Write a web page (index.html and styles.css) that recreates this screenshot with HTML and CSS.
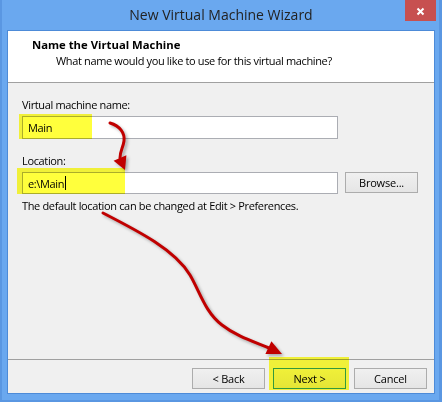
FILE: index.html
```html
<!DOCTYPE html>
<html>
<head>
<meta charset="utf-8">
<link rel="stylesheet" href="styles.css">
</head>
<body>
<div class="window">
  <div class="titlebar">
    <span class="title">New Virtual Machine Wizard</span>
    <div class="close">
      <svg width="31" height="21" viewBox="0 0 31 21"><path d="M12.5 8.5 L18.5 14.5 M18.5 8.5 L12.5 14.5" stroke="#fff" stroke-width="2" fill="none"/></svg>
    </div>
  </div>
  <div class="client">
    <div class="header">
      <div class="h-title">Name the Virtual Machine</div>
      <div class="h-sub">What name would you like to use for this virtual machine?</div>
    </div>
    <div class="body">
      <div class="lbl">Virtual machine name:</div>
      <div class="row"><div class="textbox">Main</div></div>
      <div class="lbl lbl2">Location:</div>
      <div class="row"><div class="textbox tb2">e:\Main<span class="caret"></span></div><button class="btn browse">Browse...</button></div>
      <div class="hint">The default location can be changed at Edit &gt; Preferences.</div>
    </div>
    <div class="footer">
      <button class="btn">&lt; Back</button>
      <button class="btn default">Next &gt;</button>
      <button class="btn">Cancel</button>
    </div>
  </div>
  <div class="hl hl-name"></div>
  <div class="hl hl-loc"></div>
  <div class="hl hl-next"></div>
  <svg class="arrows" width="442" height="402" viewBox="0 0 442 402">
    <g fill="none" stroke="#c00000" stroke-width="3" stroke-linecap="round">
      <path d="M110,123 C120,126 125,133 124,141 C123,148 120,151 120,158"/>
      <path d="M103,213 C140,232 175,250 190,275 C200,292 205,312 222,325 C236,336 252,341 269,348"/>
    </g>
    <g fill="#c00000">
      <polygon points="125,170 113.6,160.7 126.4,155.3"/>
      <polygon points="282,354 265.4,353.9 271.4,341.3"/>
    </g>
  </svg>
</div>
</body>
</html>
```
FILE: styles.css
```css
html, body {
  margin: 0;
  padding: 0;
  background: #ffffff;
}
.window {
  position: relative;
  width: 442px;
  height: 402px;
  box-sizing: border-box;
  background: #6aa8ef;
  box-shadow: inset 2px 0 0 #5a97e2, inset -3px 0 0 #5a97e2, inset 0 -2px 0 #5a97e2;
  display: flex;
  flex-direction: column;
  font-family: "Open Sans", "Noto Sans", sans-serif;
  font-size: 11px;
  letter-spacing: -0.35px;
  color: #000;
}
.titlebar {
  height: 30px;
  display: grid;
  grid-template-columns: 31px 1fr 31px;
  padding: 0 6px;
  align-items: start;
  letter-spacing: 0;
}
.title {
  grid-column: 2;
  text-align: center;
  font-size: 14px;
  line-height: 20px;
  padding-top: 5px;
  color: #222;
}
.close {
  grid-column: 3;
  width: 31px;
  height: 21px;
  background: #c75050;
}
.close svg { display: block; }
.client {
  margin-left: 7px;
  width: 428px;
  height: 364px;
  box-sizing: border-box;
  border: 1px solid #4d8bd8;
  background: #f0f0f0;
  display: flex;
  flex-direction: column;
}
.header {
  height: 52px;
  box-sizing: border-box;
  background: #fff;
  border-bottom: 1px solid #a0a0a0;
  padding-top: 6px;
}
.h-title {
  padding-left: 24px;
  font-weight: bold;
  font-size: 11.3px;
  letter-spacing: 0;
  line-height: 16px;
}
.h-sub {
  padding-left: 48px;
  line-height: 15px;
}
.body {
  flex: 1;
  padding: 14px 0 0 14px;
}
.lbl {
  line-height: 15px;
  margin-bottom: 4px;
}
.lbl2 { margin-top: 14px; }
.row {
  display: flex;
  align-items: flex-start;
  gap: 7px;
}
.textbox {
  width: 316px;
  height: 23px;
  box-sizing: border-box;
  border: 1px solid #abadb3;
  background: #fff;
  padding-left: 5px;
  line-height: 19px;
  display: flex;
  align-items: center;
}
.tb2 { height: 22px; }
.caret {
  display: inline-block;
  width: 1px;
  height: 14px;
  background: #000;
  margin-left: 1px;
}
.btn {
  width: 73px;
  height: 21px;
  box-sizing: border-box;
  border: 1px solid #acacac;
  background: linear-gradient(#f0f0f0, #e5e5e5);
  font-family: inherit;
  font-size: 11px;
  letter-spacing: -0.2px;
  color: #000;
  padding: 0;
  margin: 0;
  line-height: 19px;
}
.btn.default { border-color: #3399ff; }
.hint {
  margin-top: 4px;
  line-height: 15px;
}
.footer {
  height: 34px;
  box-sizing: border-box;
  border-top: 1px solid #a0a0a0;
  display: flex;
  justify-content: flex-end;
  gap: 8px;
  padding: 8px 7px 0 0;
}
.hl {
  position: absolute;
  background: #ffff3c;
  mix-blend-mode: multiply;
}
.hl-name { left: 19px; top: 114px; width: 73px; height: 25px; }
.hl-loc { left: 17px; top: 168px; width: 108px; height: 26px; }
.hl-next { left: 269px; top: 357px; width: 80px; height: 33px; }
.arrows {
  position: absolute;
  left: 0;
  top: 0;
  pointer-events: none;
  filter: drop-shadow(2px 2px 1.5px rgba(0,0,0,0.3));
}
```
